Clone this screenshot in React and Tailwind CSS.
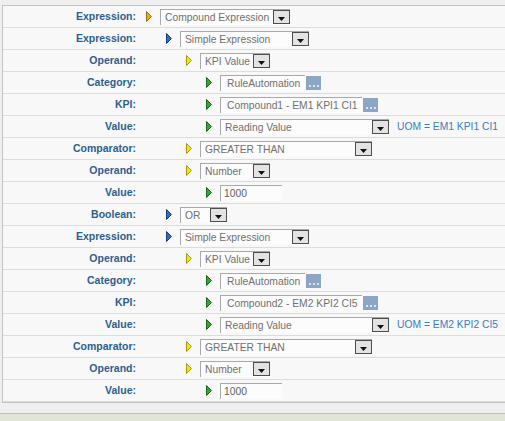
import React from "react";

const ARROWS = {
  orange: { fill: "#f2a81c", stroke: "#a86a08" },
  blue: { fill: "#2c6fc4", stroke: "#173f80" },
  yellow: { fill: "#f2e41a", stroke: "#a89a00" },
  green: { fill: "#35a535", stroke: "#1a661a" },
};

function Arrow({ color }) {
  const c = ARROWS[color];
  return (
    <svg width="6" height="11" viewBox="0 0 6 11" className="shrink-0 block">
      <polygon points="0.5,0.5 5.5,5.5 0.5,10.5" fill={c.fill} stroke={c.stroke} strokeWidth="1" />
    </svg>
  );
}

function DropButton() {
  return (
    <div className="w-[17px] h-[14px] shrink-0 self-center border border-[#4d4d4d] bg-[#e3e3e3] flex items-end justify-center pb-[2px]">
      <svg width="7" height="4" viewBox="0 0 7 4" className="block">
        <polygon points="0,0 7,0 3.5,4" fill="#111" />
      </svg>
    </div>
  );
}

function Select({ text, className }) {
  return (
    <div className={"flex h-[16px] bg-[#fcfcfc] border-t border-l border-[#a9a9a9] " + className}>
      <div className="flex-1 pl-[4px] leading-[15px] text-[#707070] whitespace-nowrap overflow-hidden">{text}</div>
      <DropButton />
    </div>
  );
}

function Lookup({ text, className }) {
  return (
    <div className="flex items-center">
      <div className={"h-[16px] bg-[#fcfcfc] border-t border-l border-[#a9a9a9] pl-[6px] leading-[15px] text-[#707070] whitespace-nowrap overflow-hidden " + className}>
        {text}
      </div>
      <div className="ml-[1px] w-[15px] h-[14px] bg-[#8ca6c6] flex items-end justify-center gap-[2px] pb-[3px]">
        <span className="w-[2px] h-[2px] bg-[#dbe4ef]" />
        <span className="w-[2px] h-[2px] bg-[#dbe4ef]" />
        <span className="w-[2px] h-[2px] bg-[#dbe4ef]" />
      </div>
    </div>
  );
}

function TextInput({ text, className }) {
  return (
    <div className={"h-[16px] bg-[#fcfcfc] border-t border-l border-[#a9a9a9] pl-[3px] leading-[15px] text-[#606060] " + className}>
      {text}
    </div>
  );
}

const INDENT = ["pl-[10px]", "pl-[30px]", "pl-[50px]", "pl-[70px]"];
const COLORS = ["orange", "blue", "yellow", "green"];

function Row({ label, depth, arrow, children, extra }) {
  return (
    <div className="flex h-[22px] items-center border-b border-[#dcdcdc]">
      <div className="w-[133px] shrink-0 text-right font-bold text-[10.5px] text-[#2d5e8e] [font-family:'Liberation_Sans',Arial,sans-serif]">
        {label}
      </div>
      <div className={"flex items-center " + INDENT[depth]}>
        <Arrow color={arrow || COLORS[depth]} />
        <div className="ml-[8px] flex items-center">{children}</div>
        {extra}
      </div>
    </div>
  );
}

function Uom({ text }) {
  return <span className="ml-[8px] text-[#3b7dbd] whitespace-nowrap">{text}</span>;
}

function SimpleExpr({ kpi, uom }) {
  return (
    <>
      <Row label="Expression:" depth={1}>
        <Select text="Simple Expression" className="w-[129px]" />
      </Row>
      <Row label="Operand:" depth={2}>
        <Select text="KPI Value" className="w-[70px]" />
      </Row>
      <Row label="Category:" depth={3}>
        <Lookup text="RuleAutomation" className="w-[85px]" />
      </Row>
      <Row label="KPI:" depth={3}>
        <Lookup text={kpi} className="w-[142px]" />
      </Row>
      <Row label="Value:" depth={3} extra={<Uom text={uom} />}>
        <Select text="Reading Value" className="w-[169px]" />
      </Row>
      <Row label="Comparator:" depth={2}>
        <Select text="GREATER THAN" className="w-[172px]" />
      </Row>
      <Row label="Operand:" depth={2}>
        <Select text="Number" className="w-[70px]" />
      </Row>
      <Row label="Value:" depth={3}>
        <TextInput text="1000" className="w-[62px]" />
      </Row>
    </>
  );
}

export default function App() {
  return (
    <div className="w-[505px] h-[421px] bg-[#efefef] flex flex-col overflow-hidden text-[10.3px] [font-family:'Liberation_Sans',Arial,sans-serif]">
      <div className="pt-[5px] pl-[2px]">
        <div className="bg-[#f8f8f8] border-l border-t border-b border-[#c4c4c4]">
          <Row label="Expression:" depth={0}>
            <Select text="Compound Expression" className="w-[130px]" />
          </Row>
          <SimpleExpr kpi="Compound1 - EM1 KPI1 CI1" uom="UOM = EM1 KPI1 CI1" />
          <Row label="Boolean:" depth={1}>
            <Select text="OR" className="w-[47px]" />
          </Row>
          <SimpleExpr kpi="Compound2 - EM2 KPI2 CI5" uom="UOM = EM2 KPI2 CI5" />
        </div>
      </div>
      <div className="flex-1" />
      <div className="h-[8px] border-t border-[#bcbcbc] bg-[#e1e5d8]" />
    </div>
  );
}
